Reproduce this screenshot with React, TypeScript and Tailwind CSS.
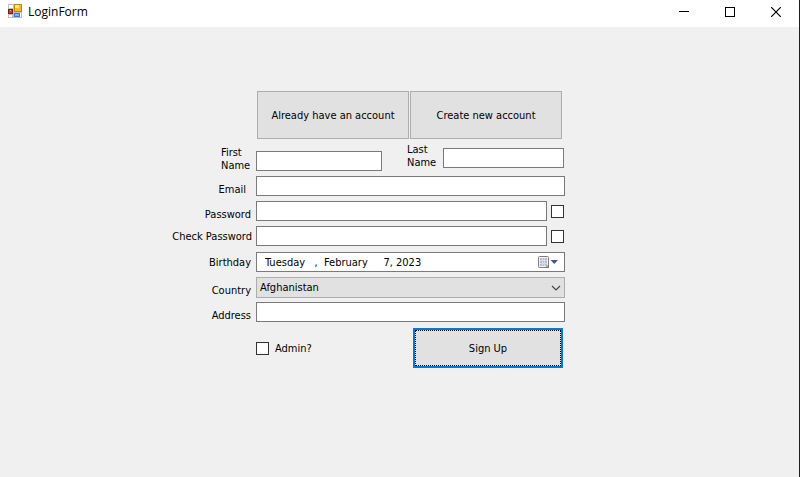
import React from "react";

const field =
  "h-5 min-w-0 border border-[#7a7a7a] bg-white px-1 outline-none";
const box =
  "size-[13px] shrink-0 appearance-none border border-[#333333] bg-white checked:bg-[#0078d7]";

function FormIcon() {
  return (
    <svg width="14" height="14" viewBox="0 0 14 14" aria-hidden="true" shapeRendering="crispEdges">
      <rect width="14" height="14" fill="#bdbdbd" />
      <path d="M1 1h4v3h-4zM1 11h3v2h-3zM12 9h1v4h-1z" fill="#ffffff" />
      <rect x="6" y="0" width="8" height="8" fill="#b58618" />
      <rect x="7" y="1" width="6" height="6" fill="#f7b928" />
      <rect x="7" y="1" width="4" height="3" fill="#fde28a" />
      <rect x="0" y="5" width="5" height="5" fill="#8c1414" />
      <rect x="1" y="6" width="3" height="3" fill="#cf3a30" />
      <rect x="2" y="6" width="1" height="1" fill="#f0a0a0" />
      <rect x="6" y="9" width="6" height="4" fill="#3b78d8" />
      <rect x="7" y="10" width="4" height="2" fill="#7fb0f2" />
    </svg>
  );
}

function Row({
  id,
  label,
  align = "items-end",
  labelClass = "pr-px",
  rowClass = "h-5",
  children,
}: {
  id: string;
  label: string;
  align?: string;
  labelClass?: string;
  rowClass?: string;
  children: React.ReactNode;
}) {
  return (
    <div className={`flex gap-1 ${rowClass}`}>
      <div className={`flex w-[82px] shrink-0 justify-end ${align}`}>
        <label htmlFor={id} className={`whitespace-nowrap ${labelClass}`}>
          {label}
        </label>
      </div>
      {children}
    </div>
  );
}

export default function App() {
  return (
    <div className="flex min-h-screen flex-col border-r border-[#1b1f22] bg-[#f0f0f0] font-['DejaVu_Sans_Condensed','DejaVu_Sans',sans-serif] text-[11px] leading-[13px] text-black">
      <header className="flex h-[27px] items-start bg-white">
        <div className="flex flex-1 items-start gap-1.5 pt-1 pl-2">
          <FormIcon />
          <h1 className="font-['Open_Sans','Noto_Sans',sans-serif] text-[12px] leading-4">LoginForm</h1>
        </div>
        <div className="flex">
          <button aria-label="Minimize" className="flex h-[23px] w-[46px] items-center justify-center">
            <svg width="10" height="10" viewBox="0 0 10 10"><path d="M0 4.5h10" stroke="#000" /></svg>
          </button>
          <button aria-label="Maximize" className="flex h-[23px] w-[46px] items-center justify-center">
            <svg width="10" height="10" viewBox="0 0 10 10" shapeRendering="crispEdges"><path d="M.5.5h9v9h-9z" fill="none" stroke="#000" /></svg>
          </button>
          <button aria-label="Close" className="flex h-[23px] w-[46px] items-center justify-center">
            <svg width="10" height="10" viewBox="0 0 10 10"><path d="M0 0l10 10M10 0L0 10" stroke="#000" strokeWidth="1.2" /></svg>
          </button>
        </div>
      </header>

      <main className="pt-16 pl-[170px]">
        <form className="w-[395px]" onSubmit={(e) => e.preventDefault()}>
          <div className="flex gap-px pr-[3px] pl-[87px]">
            <button type="button" className="h-12 flex-1 border border-[#adadad] bg-[#e1e1e1]">
              Already have an account
            </button>
            <button type="button" className="h-12 flex-1 border border-[#adadad] bg-[#e1e1e1]">
              Create new account
            </button>
          </div>

          <div className="flex items-start pt-1 pr-px">
            <label htmlFor="first" className="ml-[51px] w-[35px] pt-[3px]">First Name</label>
            <input id="first" className={`mt-2 w-[126px] ${field}`} />
            <label htmlFor="last" className="ml-[25px] w-9">Last Name</label>
            <input id="last" className={`mt-[5px] flex-1 ${field}`} />
          </div>

          <div className="flex flex-col gap-[5px] pt-1">
            <Row id="email" label="Email" labelClass="pr-1.5">
              <input id="email" className={`flex-1 ${field}`} />
            </Row>
            <Row id="password" label="Password">
              <input id="password" type="password" className={`flex-1 ${field}`} />
              <div className="flex w-3.5 items-center">
                <input type="checkbox" aria-label="Show password" className={box} />
              </div>
            </Row>
            <Row id="check" label="Check Password" align="items-center" labelClass="">
              <input id="check" type="password" className={`flex-1 ${field}`} />
              <div className="flex w-3.5 items-center">
                <input type="checkbox" aria-label="Show check password" className={box} />
              </div>
            </Row>
            <Row id="birthday" label="Birthday" align="items-center" rowClass="h-[21px] pt-px">
              <div className="flex h-5 flex-1 items-center border border-[#7a7a7a] bg-white pr-1.5 pl-2">
                <input
                  id="birthday"
                  className="min-w-0 flex-1 bg-transparent outline-none"
                  defaultValue="Tuesday   ,  February     7, 2023"
                />
                <button type="button" aria-label="Open calendar" className="flex items-center">
                  <svg width="21" height="14" viewBox="0 0 21 14">
                    <rect x="1.5" y="1.5" width="10" height="11" rx="1" fill="#f1f2f5" stroke="#857a7c" />
                    <path d="M3 3h7v8H3z" fill="#b3bfce" />
                    <path d="M3 5.5h7M3 8.5h7M5.5 3v8M7.5 3v8" stroke="#d6dde6" />
                    <path d="M9 12.5l2.5-2.5v2.5z" fill="#fff" stroke="#75696b" />
                    <path d="M13.5 5h7.500l-3.750 4z" fill="#46598c" />
                  </svg>
                </button>
              </div>
            </Row>
            <Row id="country" label="Country">
              <div className="relative h-[21px] flex-1">
                <select
                  id="country"
                  className="block h-[21px] w-full appearance-none border border-[#adadad] bg-[#e1e1e1] pr-5 pl-[3px] outline-none"
                >
                  <option>Afghanistan</option>
                </select>
                <svg className="pointer-events-none absolute top-2 right-1" width="10" height="6" viewBox="0 0 10 6">
                  <path d="M1 1l4 4 4-4" fill="none" stroke="#444" strokeWidth="1.2" />
                </svg>
              </div>
            </Row>
            <Row id="address" label="Address">
              <input id="address" className={`flex-1 ${field}`} />
            </Row>
          </div>

          <div className="flex items-center justify-between pt-1.5 pr-0.5 pl-[86px]">
            <label className="flex items-center gap-1.5">
              <input type="checkbox" className={box} />
              Admin?
            </label>
            <button type="submit" className="h-10 w-[150px] border-2 border-[#0078d7] bg-[#e1e1e1]">
              <span className="flex h-full items-center justify-center border border-dotted border-black">
                Sign Up
              </span>
            </button>
          </div>
        </form>
      </main>
    </div>
  );
}
